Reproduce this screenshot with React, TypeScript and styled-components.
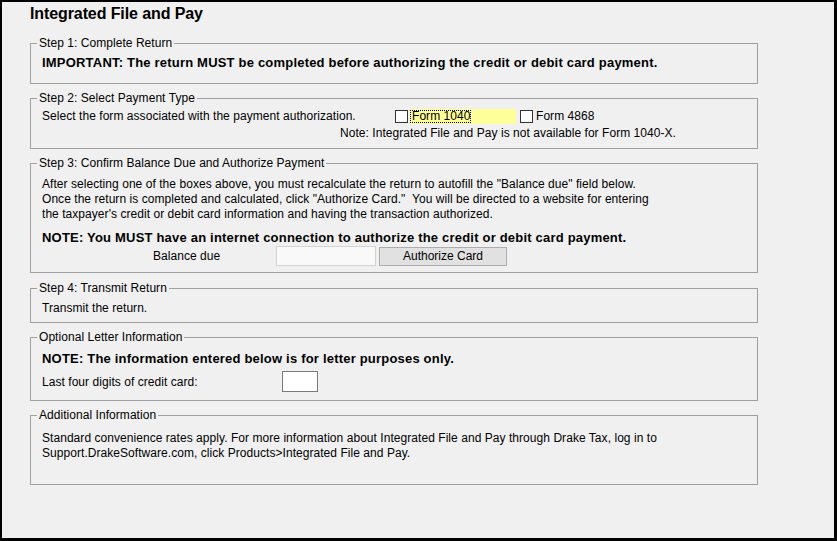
import React from 'react';
import styled, { createGlobalStyle } from 'styled-components';

const GlobalStyle = createGlobalStyle`
  html, body {
    margin: 0;
    padding: 0;
    background: #000;
  }
`;

const Window = styled.div`
  width: 837px;
  height: 541px;
  box-sizing: border-box;
  border-style: solid;
  border-color: #000;
  border-width: 2px 3px 3px 2px;
  background: #f0f0f0;
  padding: 2px 0 0 28px;
  font-family: "Liberation Sans", Arial, sans-serif;
  font-size: 12px;
  letter-spacing: 0.05px;
  color: #000;
`;

const Title = styled.h1`
  margin: 0;
  font-size: 16px;
  line-height: 20px;
  font-weight: bold;
  letter-spacing: -0.1px;
`;

const Group = styled.fieldset<{ $gap: number; $pb: number }>`
  margin: ${p => p.$gap}px 0 0;
  padding: 0 11px ${p => p.$pb}px;
  border: 1px solid #a0a0a0;
  width: 728px;
  box-sizing: border-box;
  min-width: 0;
`;

const Legend = styled.legend`
  padding: 0 2px;
  margin-left: -5px;
  font-size: 12px;
  line-height: 14px;
`;

const Body = styled.div<{ $pt: number }>`
  padding-top: ${p => p.$pt}px;
`;

const Line = styled.div<{ $mt?: number; $indent?: number }>`
  line-height: 14px;
  margin-top: ${p => p.$mt ?? 0}px;
  padding-left: ${p => p.$indent ?? 0}px;
`;

const Para = styled.div`
  line-height: 15px;
  white-space: pre;
`;

const Strong = styled.div<{ $mt?: number }>`
  font-size: 13px;
  line-height: 16px;
  font-weight: bold;
  letter-spacing: 0.2px;
  margin-top: ${p => p.$mt ?? 0}px;
`;

const Row = styled.div<{ $h: number; $mt?: number }>`
  display: flex;
  align-items: center;
  height: ${p => p.$h}px;
  margin-top: ${p => p.$mt ?? 0}px;
`;

const Label = styled.span<{ $w: number; $indent?: number }>`
  width: ${p => p.$w}px;
  padding-left: ${p => p.$indent ?? 0}px;
  box-sizing: border-box;
  flex: none;
  line-height: 14px;
`;

const Check = styled.span<{ $gap?: number }>`
  width: 13px;
  height: 13px;
  box-sizing: border-box;
  border: 1px solid #333;
  background: #fff;
  margin-left: ${p => p.$gap ?? 0}px;
  flex: none;
`;

const Option = styled.span<{ $highlight?: boolean }>`
  display: flex;
  align-items: center;
  height: 15px;
  margin-left: ${p => (p.$highlight ? 2 : 3)}px;
  width: ${p => (p.$highlight ? '106px' : 'auto')};
  background: ${p => (p.$highlight ? '#ffff99' : 'transparent')};
  line-height: 13px;
`;

const Focus = styled.span`
  padding: 0 1px 0 2px;
  outline: 1px dotted #000;
  outline-offset: -1px;
  line-height: 13px;
`;

const Field = styled.span<{ $w: number; $h: number; $soft?: boolean }>`
  width: ${p => p.$w}px;
  height: ${p => p.$h}px;
  box-sizing: border-box;
  border: 1px solid ${p => (p.$soft ? '#d4d4d4' : '#7a7a7a')};
  background: ${p => (p.$soft ? '#f9f9f9' : '#fff')};
  flex: none;
`;

const Button = styled.button`
  width: 128px;
  height: 19px;
  margin-left: 3px;
  padding: 0;
  box-sizing: border-box;
  border: 1px solid #adadad;
  background: #e1e1e1;
  font-family: inherit;
  font-size: 12px;
  color: #000;
  line-height: 16px;
`;

export default function App() {
  return (
    <>
      <GlobalStyle />
      <Window>
        <Title>Integrated File and Pay</Title>

        <Group $gap={12} $pb={12}>
          <Legend>Step 1: Complete Return</Legend>
          <Body $pt={5}>
            <Strong>IMPORTANT: The return MUST be completed before authorizing the credit or debit card payment.</Strong>
          </Body>
        </Group>

        <Group $gap={7} $pb={8}>
          <Legend>Step 2: Select Payment Type</Legend>
          <Body $pt={3}>
            <Row $h={16}>
              <Label $w={353}>Select the form associated with the payment authorization.</Label>
              <Check />
              <Option $highlight>
                <Focus>Form 1040</Focus>
              </Option>
              <Check $gap={4} />
              <Option>Form 4868</Option>
            </Row>
            <Line $mt={2} $indent={298}>Note: Integrated File and Pay is not available for Form 1040-X.</Line>
          </Body>
        </Group>

        <Group $gap={7} $pb={6}>
          <Legend>Step 3: Confirm Balance Due and Authorize Payment</Legend>
          <Body $pt={7}>
            <Para>After selecting one of the boxes above, you must recalculate the return to autofill the "Balance due" field below.</Para>
            <Para>Once the return is completed and calculated, click "Authorize Card."  You will be directed to a website for entering</Para>
            <Para>the taxpayer's credit or debit card information and having the transaction authorized.</Para>
            <Strong $mt={8}>NOTE: You MUST have an internet connection to authorize the credit or debit card payment.</Strong>
            <Row $h={20}>
              <Label $w={234} $indent={111}>Balance due</Label>
              <Field $w={100} $h={20} $soft />
              <Button type="button">Authorize Card</Button>
            </Row>
          </Body>
        </Group>

        <Group $gap={8} $pb={7}>
          <Legend>Step 4: Transmit Return</Legend>
          <Body $pt={6}>
            <Line>Transmit the return.</Line>
          </Body>
        </Group>

        <Group $gap={7} $pb={8}>
          <Legend>Optional Letter Information</Legend>
          <Body $pt={7}>
            <Strong>NOTE: The information entered below is for letter purposes only.</Strong>
            <Row $h={21} $mt={4}>
              <Label $w={240}>Last four digits of credit card:</Label>
              <Field $w={36} $h={21} />
            </Row>
          </Body>
        </Group>

        <Group $gap={7} $pb={23}>
          <Legend>Additional Information</Legend>
          <Body $pt={9}>
            <Para>Standard convenience rates apply. For more information about Integrated File and Pay through Drake Tax, log in to</Para>
            <Para>Support.DrakeSoftware.com, click Products&gt;Integrated File and Pay.</Para>
          </Body>
        </Group>
      </Window>
    </>
  );
}
